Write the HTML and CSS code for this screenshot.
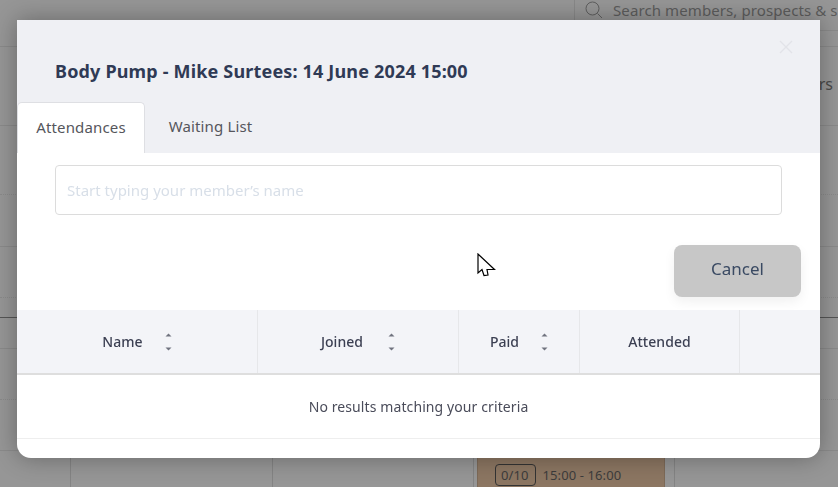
FILE: index.html
```html
<!DOCTYPE html>
<html lang="en">
<head>
<meta charset="utf-8">
<title>Body Pump attendances</title>
<link rel="stylesheet" href="styles.css">
</head>
<body>
<div class="page">
  <div class="topbar">
    <div class="search">
      <svg class="search-icon" width="18" height="18" viewBox="0 0 18 18" fill="none" stroke="#5f5f5f" stroke-width="1"><circle cx="7.5" cy="7.5" r="6.5"/><path d="M12.5 12.5L17 17"/></svg>
      <span>Search members, prospects &amp; s</span>
    </div>
  </div>
  <div class="row r1"></div>
  <div class="row r2"><span class="edge-text">Filters</span></div>
  <div class="row r3 dotted"></div>
  <div class="row r4"></div>
  <div class="row r5 dotted"></div>
  <div class="row r6 dark"></div>
  <div class="row r7"></div>
  <div class="row r8 dotted"></div>
  <div class="row r9"></div>
  <div class="cal-row">
    <div class="cal-cell"></div>
    <div class="cal-cell"></div>
    <div class="cal-cell"></div>
    <div class="cal-cell">
      <div class="event"><span class="event-badge">0/10</span><span>15:00 - 16:00</span></div>
    </div>
    <div class="cal-cell"></div>
  </div>
</div>

<div class="modal">
  <header class="modal-head">
    <h1 class="modal-title">Body Pump - Mike Surtees: 14 June 2024 15:00</h1>
    <svg class="modal-close" width="14" height="14" viewBox="0 0 14 14" fill="none" stroke="#e2e3e8" stroke-width="1.4"><path d="M1 1L13 13M13 1L1 13"/></svg>
    <nav class="tabs">
      <div class="tab active">Attendances</div>
      <div class="tab">Waiting List</div>
    </nav>
  </header>
  <div class="modal-body">
    <input class="member-input" type="text" placeholder="Start typing your member’s name">
    <div class="actions"><button class="cancel" type="button">Cancel</button></div>
  </div>
  <div class="table">
    <div class="thead">
      <div class="th">Name<svg class="sort" width="7" height="18" viewBox="0 0 7 18" fill="#70737f"><path d="M3.5 0.5L6.5 3.5H0.5Z"/><path d="M0.5 14.5H6.5L3.5 17.5Z"/></svg></div>
      <div class="th th-joined">Joined<svg class="sort" width="7" height="18" viewBox="0 0 7 18" fill="#70737f"><path d="M3.5 0.5L6.5 3.5H0.5Z"/><path d="M0.5 14.5H6.5L3.5 17.5Z"/></svg></div>
      <div class="th">Paid<svg class="sort" width="7" height="18" viewBox="0 0 7 18" fill="#70737f"><path d="M3.5 0.5L6.5 3.5H0.5Z"/><path d="M0.5 14.5H6.5L3.5 17.5Z"/></svg></div>
      <div class="th">Attended</div>
      <div class="th"></div>
    </div>
    <div class="empty">No results matching your criteria</div>
  </div>
</div>

<svg class="cursor" width="19" height="25" viewBox="0 0 19 25"><path d="M1 1V20L5 16.5L7 22.5L11 22L10 16.5H17.5Z" fill="#fff" stroke="#000" stroke-width="1.2" stroke-linejoin="miter"/></svg>
</body>
</html>
```
FILE: styles.css
```css
* { box-sizing: border-box; }
html, body { margin: 0; height: 100%; }
body {
  font-family: "Noto Sans", "Open Sans", sans-serif;
  background: #969696;
  overflow: hidden;
}
.page { height: 487px; overflow: hidden; background: #969696; color: #555; }
.topbar { height: 31px; display: flex; justify-content: flex-end; }
.search {
  width: 264px;
  height: 31px;
  border-left: 1px solid #888;
  border-bottom: 1px solid #8a8a8a;
  display: flex;
  align-items: center;
  gap: 10px;
  padding-left: 10px;
  padding-bottom: 11px;
  font-size: 15px;
  letter-spacing: .1px;
  color: #5c5c5c;
  white-space: nowrap;
  overflow: hidden;
}
.search-icon { flex: none; }
.row { border-bottom: 1px solid #8a8a8a; position: relative; }
.row.dotted { border-bottom-style: dotted; }
.row.dark { border-bottom-color: #555; }
.r1 { height: 16px; }
.r2 { height: 79px; display: flex; justify-content: flex-end; padding-right: 5px; padding-top: 27px; font-size: 16px; color: #4a4a4a; }
.r3 { height: 69px; }
.r4 { height: 52px; }
.r5 { height: 51px; }
.r6 { height: 20px; }
.r7 { height: 31px; }
.r8 { height: 51px; }
.r9 { height: 51px; }
.edge-text { line-height: 20px; }
.cal-row {
  height: 37px;
  display: grid;
  grid-template-columns: 71px 202px 201px 201px 1fr;
}
.cal-cell { border-right: 1px solid #848484; min-width: 0; padding: 0 9px 0 3px; }
.cal-cell:last-child { border-right: 0; }
.event {
  height: 49px;
  background: #8c7662;
  margin-top: -12px;
  padding: 25px 0 0 17px;
  display: flex;
  align-items: flex-start;
  gap: 7px;
  font-size: 13px;
  letter-spacing: .1px;
  line-height: 22px;
  color: #3c3c3c;
  white-space: nowrap;
  border-left: 1px solid #7d6a58;
  border-right: 1px solid #7d6a58;
}
.event-badge { border: 1px solid #333; border-radius: 4px; padding: 0 6px 0 5px; line-height: 20px; }

.modal {
  position: fixed;
  left: 17px;
  top: 20px;
  width: 803px;
  height: 438px;
  background: #fff;
  border-radius: 0 0 14px 14px;
  box-shadow: 0 0 24px rgba(0, 0, 0, .32);
  display: flex;
  flex-direction: column;
  overflow: hidden;
}
.modal-head {
  position: relative;
  height: 133px;
  flex: none;
  background: #eff0f4;
  padding: 39px 0 0;
  display: flex;
  flex-direction: column;
}
.modal-title {
  margin: 0 0 0 38px;
  font-size: 18px;
  letter-spacing: .17px;
  line-height: 24px;
  font-weight: 700;
  color: #2f3a55;
}
.modal-close { position: absolute; top: 20px; left: 762px; }
.tabs { margin-top: auto; display: flex; height: 51px; }
.tab {
  width: 128px;
  font-size: 15px;
  letter-spacing: .15px;
  line-height: 48px;
  text-align: center;
  color: #55565c;
}
.tab.active {
  background: #fff;
  border: 1px solid #dedfe3;
  border-bottom: 0;
  border-radius: 5px 5px 0 0;
}
.tab + .tab { width: 131px; }
.modal-body { height: 157px; flex: none; padding: 12px 38px 0; display: flex; flex-direction: column; }
.member-input {
  width: 727px;
  height: 50px;
  flex: none;
  border: 1px solid #dcdcdc;
  border-radius: 4px;
  padding: 0 11px;
  font: inherit;
  font-size: 15px;
  outline: 0;
}
.member-input::placeholder { color: #d8dfe8; opacity: 1; }
.actions { display: flex; justify-content: flex-end; margin-top: 30px; margin-right: -19px; }
.cancel {
  width: 127px;
  height: 52px;
  border: 0;
  border-radius: 8px;
  background: #c7c7c7;
  color: #3a4a63;
  font: inherit;
  font-size: 17px;
  padding: 0 0 6px;
  box-shadow: 0 5px 12px rgba(0, 0, 0, .06);
}
.thead {
  display: grid;
  grid-template-columns: 241px 201px 121px 160px 80px;
  height: 65px;
  background: #f3f4f8;
  border-bottom: 2px solid #dedede;
}
.th {
  display: flex;
  align-items: center;
  justify-content: center;
  gap: 22px;
  border-right: 1px solid #e6e7ea;
  font-size: 14px;
  letter-spacing: .05px;
  font-weight: 500;
  color: #3b3f52;
}
.th-joined { gap: 25px; }
.th:last-child { border-right: 0; }
.empty {
  height: 64px;
  display: flex;
  align-items: center;
  justify-content: center;
  border-bottom: 1px solid #eeeeee;
  font-size: 14px;
  letter-spacing: .1px;
  color: #4a4c5a;
}
.cursor { position: fixed; left: 477px; top: 253px; }
```
